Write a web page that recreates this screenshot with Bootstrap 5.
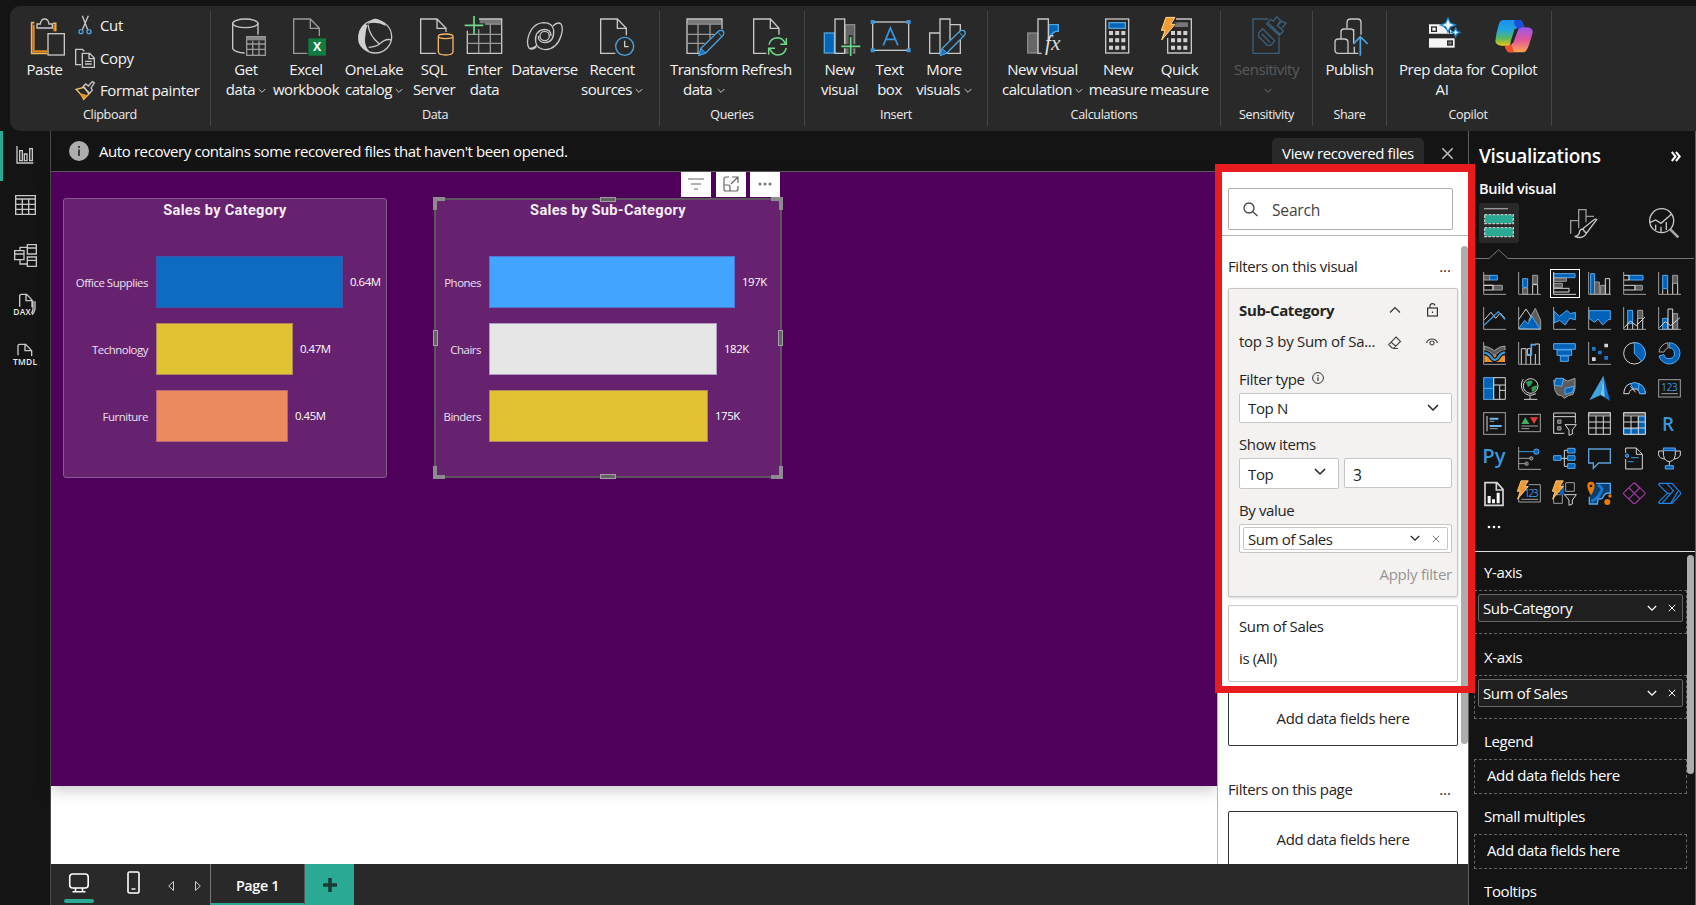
<!DOCTYPE html>
<html lang="en" data-bs-theme="dark">
<head>
<meta charset="utf-8">
<meta name="viewport" content="width=device-width, initial-scale=1">
<title>Report editor</title>
<link href="https://cdn.jsdelivr.net/npm/bootstrap@5.3.0/dist/css/bootstrap.min.css" rel="stylesheet">
<style>
body{font-family:"Open Sans","Noto Sans",sans-serif;font-size:15px;letter-spacing:-.37px;line-height:20px;background:#141414;color:#f3f3f3;width:1696px;height:905px;overflow:hidden}
svg{display:block;overflow:visible;flex:none}
svg text{letter-spacing:0}
.s{fill:none;stroke:#c8c8c8;stroke-width:4}
.g{fill:none;stroke:#9a9a9a;stroke-width:4}
.ribbon-wrap{height:131px;padding:6px 0 0 10px}
.ribbon{height:125px;background:#292929;border-radius:10px 0 0 10px}
.grp{position:relative;border-right:1px solid #454545;height:115px;margin-top:5px;padding-top:5px}
.grp .cap{height:20px;font-size:12.6px;letter-spacing:-.35px;text-align:center;color:#eee;margin-top:5px}
.btns{height:84px;justify-content:center;letter-spacing:-.45px}
.rb{text-align:center;white-space:nowrap;flex:none}
.rb svg{margin:0 auto 3px}
.rb .chev{display:inline-block;margin:0 0 0 3px;color:#ccc}
.sm-row{height:32.5px;gap:5px}
.rail{width:51px;border-right:1px solid #4a4a4a;flex:none}
.rail div{height:50px;display:flex;align-items:center;justify-content:center;padding-bottom:2px}
.rail .on{border-left:3px solid #2aaa94;padding-right:3px}
.msg{height:41px;border-bottom:1px solid #605e5c;color:#fff;padding:0 12px 1px 18px;letter-spacing:-.41px}
.view-btn{background:#292929;border-radius:5px;width:152px;height:30px;line-height:31px;margin-top:4px;text-align:center}
.canvas{background:#fff;flex:1;min-width:0}
.page-bg{background:#4f005a;height:614px;padding:26px 0 0 12px;gap:47px;box-shadow:0 4px 14px rgba(0,0,0,.22)}
.viz{position:relative;background:#66216f;border:1px solid #8b5a93;border-radius:3px;height:280px;padding-top:1px}
.viz h2{font:700 14.6px/20px Roboto,sans-serif;letter-spacing:.3px;text-align:center;color:#f5eef6;margin:0 0 36px}
.br{height:52px;margin-bottom:15px;font-size:11.4px;letter-spacing:-.45px;color:#ece2ee}
.br .nm{text-align:right;padding:2px 8px 0 0;flex:none}
.br .bar{height:52px;border:1px solid rgba(110,60,150,.45);flex:none}
.br .vl{padding-left:7px;color:#fff}
.sel{border:1px solid #5f5560;outline:1px solid #5f5560;outline-offset:-2px;border-radius:0}
.hd{position:absolute;background:#646264;border:1px solid #a19fa2}
.crn{position:absolute;width:12px;height:13px;border:0 solid #8e8b90}
.vtools{position:absolute;right:1px;top:-27px;gap:4.5px}
.vtools div{background:#fff;width:30px;height:25px;display:flex;align-items:center;justify-content:center;padding-bottom:2px}
.fpane{width:251px;background:#fff;border-left:1px solid #b5b5b5;color:#252423;flex:none;position:relative;height:692px;overflow:hidden}
.fpane .inn{padding:0 10px 0 10px}
.srch{height:42px;width:225px;border:1px solid #b0aeac;border-radius:2px;margin-top:16px;padding-left:14px;gap:14px;font-size:15.6px;color:#444}
.fcard{border:1px solid #c8c6c4;border-radius:2px;padding:0 5px 0 10px}
.fcard.act{background:#f3f2f1;box-shadow:0 1px 3px rgba(0,0,0,.18)}
.inp{background:#fff;border:1px solid #c8c6c4;border-radius:2px;height:30px;padding:0 12px 0 8px}
.drop{border:1px solid #333;border-radius:2px;text-align:center}
.sbar{position:absolute;background:#adadad;border-radius:4px}
.hilite{position:absolute;left:1215px;top:164px;width:260px;height:529px;border:7px solid #e81b1e;border-top-width:8px;z-index:5}
.vpane{width:228px;border-left:1px solid #606060;border-right:1px solid #606060;flex:none;color:#fff;position:relative;height:774px;overflow:hidden}
.vgrid{display:grid;grid-template-columns:repeat(6,35px);grid-auto-rows:35px;padding:7px 0 0 8px}
.vgrid>div{display:flex;align-items:center;justify-content:center}
.vgrid .pick{border:1px solid #fff;margin:3px 2.5px}
.vgrid svg{width:23px;height:23px}
.vgrid svg svg{width:40px;height:60px}
.a{fill:none;stroke:#9f9f9f;stroke-width:3}
.w{fill:none;stroke:#d6d6d6;stroke-width:3}
.b{fill:#0063b8;stroke:#55aaf0;stroke-width:3}
.k{fill:#5c5c5c;stroke:#9f9f9f;stroke-width:3}
.well{border:1px dashed #666;margin-left:5px;width:213px}
.chip{border:1px solid #666;border-radius:2px;background:#1f1f1f;height:28px;margin:3px;padding:0 6px 0 4px}
.foot{height:41px;background:#292929}
.tab-on{width:95px;border-left:1px solid #777;border-right:1px solid #555;border-bottom:2px solid #2aaa94;line-height:44px;text-align:center;font-weight:600;font-size:14.4px;color:#fff}
.addp{width:49px;background:#2aaa94}
</style>
</head>
<body>
<svg width="0" height="0" class="position-absolute">
<defs>
<linearGradient id="cpA" x1="0" y1="0" x2="0" y2="1"><stop offset="0" stop-color="#1b8ff0"/><stop offset=".4" stop-color="#23a7d8"/><stop offset=".7" stop-color="#58b860"/><stop offset="1" stop-color="#f2c411"/></linearGradient>
<linearGradient id="cpB" x1="0" y1="0" x2="0" y2="1"><stop offset="0" stop-color="#9a55f0"/><stop offset=".5" stop-color="#e0569a"/><stop offset="1" stop-color="#ffa552"/></linearGradient>
<symbol id="pencil" viewBox="0 0 80 80"><path d="M4 76L9 56L62 4Q70-1 76 5Q80 12 74 18L23 70Z" fill="#292929" stroke="#4ea3e0" stroke-width="4"/><path d="M2 78L9 56L23 70ZM60 8L71 20" fill="#1173cc" stroke="#4ea3e0" stroke-width="3"/></symbol>
<symbol id="cd" viewBox="0 0 12 8"><path d="M1 1L6 6L11 1" fill="none" stroke="currentColor" stroke-width="1.500"/></symbol>
<symbol id="xx" viewBox="0 0 10 10"><path d="M1 1L9 9M9 1L1 9" fill="none" stroke="currentColor" stroke-width="1.2"/></symbol>
<symbol id="bolt" viewBox="0 0 46 74"><path d="M17 3H44L31 24H44L4 71L14 42H3Z" fill="#f09a34" stroke="#ffd98a" stroke-width="3"/></symbol>
</defs></svg>

<header class="ribbon-wrap">
<div class="ribbon d-flex">
  <div class="grp" style="width:201px">
    <div class="btns d-flex justify-content-start">
      <div class="rb" style="width:65px;padding-left:4px"><svg width="40" height="40" viewBox="0 0 120 120"><path d="M28 20H20V112H66M92 46V22H84" fill="none" stroke="#f2b65c" stroke-width="5"/><path d="M26 26V106H66M88 46V26" fill="none" stroke="#e0861a" stroke-width="6"/><path class="s" style="fill:#292929" d="M36 36V24H46Q48 9 59 9Q70 9 72 24H82V36Z"/><rect class="s" x="69" y="53" width="49" height="64"/></svg>Paste</div>
      <div style="margin-top:-2px;letter-spacing:-.37px">
        <div class="sm-row d-flex align-items-center" style="height:22px"><svg width="20" height="20" viewBox="0 0 60 60"><path d="M22 2L38 44M40 2L22 44" class="s" stroke-width="3"/><circle cx="18" cy="50" r="6" fill="none" stroke="#4ea3e0" stroke-width="4"/><circle cx="42" cy="50" r="6" fill="none" stroke="#4ea3e0" stroke-width="4"/></svg>Cut</div>
        <div class="sm-row d-flex align-items-center" style="height:43px"><svg width="20" height="20" viewBox="0 0 60 60"><path class="s" d="M18 50H2V4H22L28 10M22 16H44L58 30V58H22ZM42 16V32H58M30 40H50M30 48H50"/></svg>Copy</div>
        <div class="sm-row d-flex align-items-center" style="height:21px"><svg width="20" height="20" viewBox="0 0 60 60"><path d="M3 28L28 22L42 42L26 58Q20 44 3 28Z" fill="#292929" stroke="#f2c66c" stroke-width="4"/><path d="M12 38L38 46L26 56Z" fill="#e8912d"/><path class="s" d="M24 20L32 12L40 18L52 5L58 9L48 24L52 30L44 40Z"/></svg>Format painter</div>
      </div>
    </div>
    <div class="cap">Clipboard</div>
  </div>

  <div class="grp" style="width:449px">
    <div class="btns d-flex" style="padding-right:6px">
      <div class="rb" style="width:52px"><svg width="40" height="40" viewBox="0 0 120 120"><ellipse class="s" cx="58" cy="22" rx="38" ry="13"/><path class="s" d="M20 22V98Q28 110 56 111M96 22V56"/><rect class="g" x="62" y="62" width="56" height="56"/><path d="M62 68H118" stroke="#888" stroke-width="10"/><path class="g" d="M62 84H118M62 100H118M80 74V118M99 74V118"/></svg>Get<br>data<svg class="chev" width="8" height="6"><use href="#cd"/></svg></div>
      <div class="rb" style="width:68px"><svg width="40" height="40" viewBox="0 0 120 120"><path class="g" d="M64 112H23V9H73L100 37V60M73 9V37H100"/><rect x="67" y="67" width="53" height="52" fill="#107c41"/><text x="93.500" y="106" font-size="37" font-weight="700" fill="#fff" text-anchor="middle">X</text></svg>Excel<br>workbook</div>
      <div class="rb" style="width:68px"><svg width="40" height="40" viewBox="0 0 120 120"><path d="M36 30Q8 52 14 80Q24 104 46 106Q28 86 34 60ZM40 24Q56 4 72 10Q90 16 96 30Q66 14 40 24Z" fill="#d0d0d0"/><circle class="s" cx="64" cy="62" r="49"/><path d="M34 24Q8 42 14 76Q22 98 40 104Q24 76 40 28Z" fill="#d0d0d0"/><path class="s" d="M42 26Q46 60 76 84M112 72Q96 66 76 84Q68 92 44 94"/></svg>OneLake<br>catalog<svg class="chev" width="8" height="6"><use href="#cd"/></svg></div>
      <div class="rb" style="width:52px"><svg width="40" height="40" viewBox="0 0 120 120"><path class="s" d="M66 112H20V9H69L96 37V48M69 9V37H96"/><path d="M73 62V108Q74 117 95 117T117 108V62" fill="#292929" stroke="#f5b566" stroke-width="4"/><ellipse cx="95" cy="61" rx="22" ry="7" fill="#292929" stroke="#f5b566" stroke-width="4"/></svg>SQL<br>Server</div>
      <div class="rb" style="width:49px"><svg width="40" height="40" viewBox="0 0 120 120"><path d="M44 16H110" stroke="#777" stroke-width="12"/><path class="s" d="M42 9H110V112H7V44"/><path class="g" d="M7 55H110M7 82H110M41 40V112M76 24V112M60 24H110"/><path d="M27 0V56M-1 28H55" stroke="#6fd88a" stroke-width="5"/></svg>Enter<br>data</div>
      <div class="rb" style="width:71px"><svg width="40" height="40" viewBox="0 0 120 120"><path class="s" stroke-width="4.500" d="M34 93Q20 104 12 96Q4 84 10 62Q22 22 56 20Q82 20 86 42M84 30Q98 16 108 24Q116 36 108 60Q96 98 62 101Q36 100 32 78M12 96Q22 100 36 88M32 78Q28 44 58 40Q78 40 78 60M86 42Q88 78 60 80Q40 80 40 60"/><circle class="s" cx="59" cy="60" r="14"/></svg>Dataverse</div>
      <div class="rb" style="width:64px"><svg width="40" height="40" viewBox="0 0 120 120"><path class="s" d="M70 112H26V9H76L103 37V58M76 9V37H103"/><circle cx="98" cy="91" r="27" fill="#292929" stroke="#4ea3e0" stroke-width="4"/><path class="s" d="M98 74V92H110"/></svg>Recent<br>sources<svg class="chev" width="8" height="6"><use href="#cd"/></svg></div>
    </div>
    <div class="cap">Data</div>
  </div>

  <div class="grp" style="width:145px">
    <div class="btns d-flex" style="padding-right:4px">
      <div class="rb" style="width:73px;letter-spacing:-.6px"><svg width="40" height="40" viewBox="0 0 120 120"><path d="M9 16H114" stroke="#777" stroke-width="12"/><path class="s" d="M50 112H9V9H114V40"/><path class="g" d="M9 24H114M9 55H90M9 82H62M42 24V112M78 24V68"/><svg x="42" y="41" width="80" height="80"><use href="#pencil"/></svg></svg>Transform<br>data<svg class="chev" width="8" height="6" style="margin-left:5px"><use href="#cd"/></svg></div>
      <div class="rb" style="width:52px"><svg width="40" height="40" viewBox="0 0 120 120"><path class="s" d="M58 112H20V9H70L96 37V56M70 9V37H96"/><path d="M66 86Q70 66 92 65Q108 66 116 84M118 66V85H100M118 96Q112 117 92 117Q76 116 68 98M65 116V97H84" fill="none" stroke="#6fd88a" stroke-width="4.500"/></svg>Refresh</div>
    </div>
    <div class="cap">Queries</div>
  </div>

  <div class="grp" style="width:183px">
    <div class="btns d-flex" style="padding-right:4px">
      <div class="rb" style="width:49px"><svg width="40" height="40" viewBox="0 0 120 120"><rect x="13" y="51" width="30" height="60" fill="#0067b8" stroke="#4ea3e0" stroke-width="4"/><rect x="76" y="26" width="28" height="85" fill="#666" stroke="#888" stroke-width="4"/><rect class="s" x="45" y="9" width="29" height="103" style="fill:#292929"/><path d="M92 58V118M64 91H121" stroke="#292929" stroke-width="12"/><path d="M92 63V120M64 91H121" stroke="#6fd88a" stroke-width="5"/></svg>New<br>visual</div>
      <div class="rb" style="width:51px"><svg width="40" height="40" viewBox="0 0 120 120"><rect class="s" x="8" y="18" width="108" height="85"/><path d="M2 12h12v12h-12zM110 12h12v12h-12zM2 97h12v12h-12zM110 97h12v12h-12z" fill="#3a96dd"/><path d="M40 88L61 36L84 88M47 70H77" fill="none" stroke="#3a96dd" stroke-width="5"/></svg>Text<br>box</div>
      <div class="rb" style="width:58px"><svg width="40" height="40" viewBox="0 0 120 120"><path class="s" d="M48 112H17V51H48M48 112V9H78V72M78 26H109V112H64"/><svg x="46" y="41" width="80" height="80"><use href="#pencil"/></svg></svg>More<br>visuals<svg class="chev" width="8" height="6" style="margin-left:4px"><use href="#cd"/></svg></div>
    </div>
    <div class="cap">Insert</div>
  </div>

  <div class="grp" style="width:233px">
    <div class="btns d-flex">
      <div class="rb" style="width:88px"><svg width="40" height="40" viewBox="0 0 120 120"><rect x="14" y="51" width="30" height="60" fill="#666" stroke="#888" stroke-width="4"/><path d="M77 26H106V46Q90 44 82 64L77 70Z" fill="#0067b8" stroke="#4ea3e0" stroke-width="4"/><path class="s" d="M56 112H45V9H76V80"/><text x="66" y="102" font-family="Liberation Serif" font-style="italic" font-size="64" fill="#ddd">fx</text></svg>New visual<br>calculation<svg class="chev" width="8" height="6"><use href="#cd"/></svg></div>
      <div class="rb" style="width:63px"><svg width="40" height="40" viewBox="0 0 120 120"><rect class="s" x="23" y="9" width="69" height="102"/><rect x="33" y="20" width="49" height="17" fill="#0067b8" stroke="#4ea3e0" stroke-width="4"/><path d="M33 51H82M33 73H82M33 95H82" stroke="#d0d0d0" stroke-width="12" stroke-dasharray="12 6.500"/></svg>New<br>measure</div>
      <div class="rb" style="width:60px"><svg width="40" height="40" viewBox="0 0 120 120"><path class="s" d="M48 9H94V111H23V66"/><path d="M44 26H84" stroke="#777" stroke-width="14"/><path d="M33 51H82M33 73H82M33 95H82" stroke="#d0d0d0" stroke-width="12" stroke-dasharray="12 6.500"/><path d="M17 0H50L38 22H50L22 60H-4L10 40" fill="#292929"/><svg x="1" y="1" width="46" height="74"><use href="#bolt"/></svg></svg>Quick<br>measure</div>
    </div>
    <div class="cap">Calculations</div>
  </div>

  <div class="grp" style="width:92px">
    <div class="btns d-flex" style="color:#5a5a5a">
      <div class="rb"><svg width="40" height="40" viewBox="0 0 120 120" fill="none" stroke="#3c5f7a" stroke-width="4"><path d="M66 9H21V112H99V62"/><path fill="#292929" d="M38 50L50 38L86 74L74 88L64 88L38 62ZM48 54L72 80M62 24L74 10L82 16L92 2L104 14L94 28L112 46L100 58ZM68 22L104 56M94 28L108 16L120 22L108 36"/></svg>Sensitivity<br><svg class="chev" width="8" height="6" style="color:#777"><use href="#cd"/></svg></div>
    </div>
    <div class="cap">Sensitivity</div>
  </div>

  <div class="grp" style="width:74px">
    <div class="btns d-flex">
      <div class="rb"><svg width="40" height="40" viewBox="0 0 120 120"><path class="s" d="M54 36V20Q54 9 65 9H86Q96 9 96 20V56M36 68V48Q36 39 45 39H64Q74 39 74 48V82M74 39V48M88 112H28Q18 112 18 102V78Q18 69 28 69H46Q57 69 57 79V112M76 92V112"/><path d="M94 119V64M73 84L94 62L116 84" fill="none" stroke="#4ea3e0" stroke-width="5"/></svg>Publish</div>
    </div>
    <div class="cap">Share</div>
  </div>

  <div class="grp" style="width:165px">
    <div class="btns d-flex">
      <div class="rb" style="width:90px"><svg width="40" height="40" viewBox="0 0 120 120"><path d="M21 25H58L84 53H21Z" fill="#f4f4f4"/><path d="M84 53H96L84 40Z" fill="#f4f4f4"/><rect x="29" y="33" width="14" height="13" fill="none" stroke="#292929" stroke-width="4"/><rect x="21" y="67" width="77" height="28" fill="#f4f4f4"/><rect x="77" y="75" width="14" height="12" fill="#777" stroke="#292929" stroke-width="4"/><path d="M78 6L85 21L100 27L85 33L78 48L71 33L56 27L71 21ZM101 36L105 45L114 49L105 53L101 62L97 53L88 49L97 45Z" fill="#e8f6ff" stroke="#1b86d0" stroke-width="4"/></svg>Prep data for<br>AI</div>
      <div class="rb" style="width:54px"><svg width="40" height="40" viewBox="0 0 120 120"><path d="M28 12H78Q86 14 90 34L72 36Q62 38 60 52L48 86Q44 92 34 90Q4 90 4 76Q6 52 14 26Q18 12 28 12Z" fill="url(#cpA)"/><path d="M62 12H78Q86 14 90 34L70 38L60 24Z" fill="#1c4fd8"/><path d="M90 34Q118 32 116 50L106 84Q98 109 88 109H44Q36 104 32 88Q48 96 56 80L72 42Q76 34 90 34Z" fill="url(#cpB)"/><path d="M32 88Q46 92 52 84L60 109H44Q36 104 32 88Z" fill="#f0502e"/><path d="M62 38L72 40L58 80L49 80Z" fill="#292929"/></svg>Copilot</div>
    </div>
    <div class="cap" style="padding-right:2px">Copilot</div>
  </div>
</div>
</header>

<div class="d-flex" style="height:774px">
  <nav class="rail">
    <div class="on"><svg width="18" height="18" viewBox="0 0 54 54"><path class="s" stroke-width="3" d="M3 0V51H52"/><path class="s" d="M11 14H19V44H11ZM25 24H33V44H25ZM41 8H49V44H41Z"/></svg></div>
    <div><svg width="21" height="20" viewBox="0 0 63 60"><path class="s" d="M2 2H61V58H2ZM2 12H61M2 28H61M2 43H61M22 12V58M41 12V58"/></svg></div>
    <div><svg width="23" height="23" viewBox="0 0 69 69"><path class="s" stroke-width="3.500" d="M40 2H67V30H40ZM40 12H67M40 39H67V67H40ZM40 49H67M2 20H30V47H2ZM2 30H30M40 10H18V20M18 47V60H40"/></svg></div>
    <div><svg width="22" height="22" viewBox="0 0 66 66"><path class="s" d="M17 38V4Q20 1 22 1H38L54 18V40M36 2V20H54M63 22V44Q60 58 54 62M57 20V44Q56 54 52 58"/><text x="-2" y="63" font-size="25" font-weight="600" fill="#eee" textLength="52">DAX</text></svg></div>
    <div><svg width="24" height="22" viewBox="0 0 72 66"><path class="s" d="M15 34V4Q17 1 20 1H38L56 20V36M36 2V20H56"/><text x="0" y="62" font-size="25" font-weight="600" fill="#eee" textLength="72">TMDL</text></svg></div>
  </nav>

  <div class="d-flex flex-column" style="width:1417px">
    <div class="msg d-flex align-items-center">
      <svg width="20" height="20" viewBox="0 0 20 20"><circle cx="10" cy="10" r="10" fill="#adadad"/><path d="M10 8.500V15M10 5V7" stroke="#222" stroke-width="1.600"/></svg>
      <span style="margin-left:10px;padding-top:1px">Auto recovery contains some recovered files that haven't been opened.</span>
      <span class="view-btn ms-auto" style="letter-spacing:-.37px">View recovered files</span>
      <svg width="13" height="13" style="margin:5px 2px 0 17px;color:#bbb"><use href="#xx"/></svg>
    </div>
    <div class="d-flex" style="height:692px">
      <main class="canvas">
        <div class="page-bg d-flex align-items-start">
          <section class="viz" style="width:324px">
            <h2>Sales by Category</h2>
            <div class="br d-flex align-items-center"><span class="nm" style="width:92px">Office Supplies</span><span class="bar" style="width:187px;background:#0f6bc2"></span><span class="vl">0.64M</span></div>
            <div class="br d-flex align-items-center"><span class="nm" style="width:92px">Technology</span><span class="bar" style="width:137px;background:#e1c233"></span><span class="vl">0.47M</span></div>
            <div class="br d-flex align-items-center"><span class="nm" style="width:92px">Furniture</span><span class="bar" style="width:132px;background:#ec8a60"></span><span class="vl">0.45M</span></div>
          </section>
          <section class="viz sel" style="width:348px">
            <h2>Sales by Sub-Category</h2>
            <div class="br d-flex align-items-center"><span class="nm" style="width:54px">Phones</span><span class="bar" style="width:246px;background:#41a4ff"></span><span class="vl">197K</span></div>
            <div class="br d-flex align-items-center"><span class="nm" style="width:54px">Chairs</span><span class="bar" style="width:228px;background:#e6e6e6"></span><span class="vl">182K</span></div>
            <div class="br d-flex align-items-center"><span class="nm" style="width:54px">Binders</span><span class="bar" style="width:219px;background:#e1c233"></span><span class="vl">175K</span></div>
            <div class="vtools d-flex">
              <div><svg width="16" height="12" viewBox="0 0 16 12"><path d="M0 1H16M3 6H13M6 11H10" stroke="#666" stroke-width="1.200"/></svg></div>
              <div><svg width="16" height="16" viewBox="0 0 16 16" fill="none" stroke="#666" stroke-width="1.200"><path d="M6 1H3Q1 1 1 3V13Q1 15 3 15H13Q15 15 15 13V10M1 9H5Q7 9 7 11V15M9 1H15V7M15 1L8 8"/></svg></div>
              <div><svg width="14" height="4" viewBox="0 0 14 4" fill="#777"><circle cx="2" cy="2" r="1.500"/><circle cx="7" cy="2" r="1.500"/><circle cx="12" cy="2" r="1.500"/></svg></div>
            </div>
            <i class="crn" style="left:-2px;top:-2px;border-width:4px 0 0 4px"></i><i class="crn" style="right:-2px;top:-2px;border-width:4px 4px 0 0"></i>
            <i class="crn" style="left:-2px;bottom:-2px;border-width:0 0 4px 4px"></i><i class="crn" style="right:-2px;bottom:-2px;border-width:0 4px 4px 0"></i>
            <i class="hd" style="left:165px;top:-2px;width:16px;height:5px"></i><i class="hd" style="left:165px;bottom:-2px;width:16px;height:5px"></i>
            <i class="hd" style="left:-2px;top:131px;width:5px;height:16px"></i><i class="hd" style="right:-2px;top:131px;width:5px;height:16px"></i>
          </section>
        </div>
      </main>

      <aside class="fpane">
        <div class="inn">
          <div class="srch d-flex align-items-center"><svg width="15" height="15" viewBox="0 0 15 15" fill="none" stroke="#444" stroke-width="1.300"><circle cx="6" cy="6" r="5"/><path d="M9.500 9.500L14.500 14"/></svg><span style="padding-top:2px;letter-spacing:-.2px">Search</span></div>
        </div>
        <div style="border-top:1px solid #b5b5b5;margin-top:5px"></div>
        <div class="inn">
          <div class="d-flex justify-content-between" style="padding:20px 7px 0 0;height:52px"><span>Filters on this visual</span><span style="letter-spacing:0">...</span></div>
          <div class="fcard act" style="height:309px">
            <div class="d-flex align-items-center" style="height:41px"><b style="width:151px">Sub-Category</b><svg width="10" height="6" viewBox="0 0 10 6"><path d="M0 5.500L5 .5L10 5.500" fill="none" stroke="#333" stroke-width="1.200"/></svg><svg width="11" height="14" viewBox="0 0 11 14" style="margin-left:27px" fill="none" stroke="#333" stroke-width="1.200"><rect x=".6" y="5" width="9.800" height="8"/><path d="M3 5V3Q3 .7 5.500 .7Q7.500 .7 8 2.500M5.500 8.500V10"/></svg></div>
            <div class="d-flex align-items-center" style="height:22px;letter-spacing:-.28px"><span style="width:149px">top 3 by Sum of Sa...</span><svg width="13" height="13" viewBox="0 0 13 13" fill="none" stroke="#444" stroke-width="1.100" style="margin-top:2px"><path d="M8 1L12.500 5.500L6 12H4L.7 8.500ZM3 6L8 10.500M5 12.500H10"/></svg><svg width="12" height="8" viewBox="0 0 12 8" style="margin:2px 0 0 25px" fill="none" stroke="#444" stroke-width="1.200"><path d="M.5 5Q2 1 6 1T11.500 5"/><circle cx="6" cy="5" r="2"/></svg></div>
            <div class="d-flex align-items-center" style="height:41px;padding-top:12px"><span>Filter type</span><svg width="12" height="12" viewBox="0 0 12 12" style="margin:-2px 0 0 7px" fill="none" stroke="#333"><circle cx="6" cy="6" r="5.400"/><path d="M6 5.200V9M6 3V4.300" stroke-width="1.200"/></svg></div>
            <div class="inp d-flex align-items-center justify-content-between"><span>Top N</span><svg width="12" height="8"><use href="#cd"/></svg></div>
            <div style="padding-top:11px;height:35px">Show items</div>
            <div class="d-flex" style="gap:5px"><div class="inp d-flex align-items-center justify-content-between" style="width:100px;height:31px"><span>Top</span><svg width="12" height="8" style="margin-bottom:3px"><use href="#cd"/></svg></div><div class="inp d-flex align-items-center flex-fill" style="font-size:15.6px;padding-top:3px">3</div></div>
            <div style="padding-top:11px;height:35px">By value</div>
            <div class="inp" style="height:29px;padding:2px 3px"><div class="inp d-flex align-items-center" style="height:23px;padding:0 7px 0 4px"><span>Sum of Sales</span><svg class="ms-auto" width="10" height="7"><use href="#cd"/></svg><svg width="8" height="8" style="margin-left:12px;color:#777"><use href="#xx"/></svg></div></div>
            <div class="text-end" style="padding-top:11px;color:#979593;letter-spacing:-.25px">Apply filter</div>
          </div>
          <div class="fcard" style="height:77px;margin-top:8px;padding-top:10px">Sum of Sales<div style="margin-top:12px">is (All)</div></div>
          <div class="drop" style="height:56px;margin-top:8px;padding-top:17px">Add data fields here</div>
          <div class="d-flex justify-content-between" style="padding:33px 7px 0 0;height:65px"><span>Filters on this page</span><span style="letter-spacing:0">...</span></div>
          <div class="drop" style="height:64px;padding-top:17px">Add data fields here</div>
        </div>
        <div class="sbar" style="right:0;top:74px;width:7px;height:498px"></div>
      </aside>
    </div>
    <footer class="foot d-flex">
      <div style="width:55px;padding:9px 0 0 13px"><svg width="30" height="30" viewBox="0 0 30 30"><rect x="5.700" y="1" width="18.500" height="14" rx="3" fill="none" stroke="#fff" stroke-width="1.600"/><path d="M11.500 15V18M18.500 15V18M8.500 18.700H21.500" stroke="#fff" stroke-width="1.600"/><rect x="0" y="26" width="30" height="4" rx="2" fill="#2aaa94"/></svg></div>
      <div style="width:54px;padding:7px 0 0 21px"><svg width="13" height="24" viewBox="0 0 13 24"><rect x="1" y="1" width="11" height="21" rx="1.500" fill="none" stroke="#fff" stroke-width="1.600"/><path d="M4.500 18H8.500" stroke="#fff" stroke-width="1.400"/></svg></div>
      <div class="d-flex align-items-center" style="width:50px;padding:2px 0 0 8px;gap:21px"><svg width="6" height="10" viewBox="0 0 6 10" fill="none" stroke="#ccc"><path d="M5.500 .5V9.500L.7 5Z"/></svg><svg width="6" height="10" viewBox="0 0 6 10" fill="none" stroke="#ccc"><path d="M.5 .5V9.500L5.300 5Z"/></svg></div>
      <div class="tab-on">Page 1</div>
      <div class="addp d-flex align-items-center justify-content-center"><svg width="14" height="14" viewBox="0 0 14 14"><path d="M7 0V14M0 7H14" stroke="#1d3b36" stroke-width="3.600"/></svg></div>
    </footer>
  </div>

  <aside class="vpane">
    <div class="d-flex align-items-center justify-content-between" style="font-size:19px;font-weight:600;letter-spacing:-.3px;padding:12px 14px 0 10px;height:38px"><span>Visualizations</span><svg width="10" height="11" viewBox="0 0 10 11" fill="none" stroke="#fff" stroke-width="2"><path d="M.8 1L4.500 5.500L.8 10M5 1L8.700 5.500L5 10"/></svg></div>
    <div style="font-weight:600;font-size:14.600px;letter-spacing:-.3px;padding:9px 0 0 10px;height:34px">Build visual</div>
    <div class="d-flex" style="padding-left:10px;height:46px">
      <div style="width:40px;height:40px;background:#292929;border-radius:3px;padding:5px"><svg width="30" height="30" viewBox="0 0 90 90"><path d="M0 2H72" stroke="#9a9a9a" stroke-width="4"/><rect x="2" y="20" width="86" height="27" fill="#2aaa94" stroke="#c8c8c8" stroke-width="4" stroke-dasharray="8 4"/><rect x="2" y="59" width="86" height="27" fill="#2aaa94" stroke="#c8c8c8" stroke-width="4" stroke-dasharray="8 4"/></svg></div>
      <svg width="28" height="29" viewBox="0 0 84 87" style="margin:6px 0 0 51px"><path class="g" d="M2 74V35H26V58M26 46V2H48V40M48 22H72"/><path class="s" d="M80 32L50 72Q40 68 40 58L70 34Q78 28 80 32ZM40 60Q28 60 28 72Q24 82 14 82Q40 92 50 72"/></svg>
      <svg width="30" height="30" viewBox="0 0 90 90" style="margin:5px 0 0 51px"><circle class="s" cx="38" cy="38" r="36"/><path class="s" d="M2 44L20 36L36 46L68 18M20 50V66M36 56V74M52 42V66"/><path d="M64 64L88 88" stroke="#aaa" stroke-width="8"/></svg>
    </div>
    <svg width="220" height="10" viewBox="0 0 220 10" style="margin-left:5px"><path d="M0 9.500H15L24.500 .8L34 9.500H220" fill="none" stroke="#757575"/></svg>
    <div class="vgrid" style="height:292px">
      <div><svg viewBox="0 0 69 69"><path class="k" d="M2 10H20V24H2ZM2 40H58V54H30V40H2"/><path class="b" d="M20 10H43V24H20Z"/><path class="w" d="M2 40H30V54H2Z"/><path class="a" d="M2 0V67H69"/></svg></div>
      <div><svg viewBox="0 0 69 69"><path class="k" d="M44 10H59V36H44ZM14 48H29V67H14Z"/><path class="b" d="M14 20H29V46H14Z"/><path class="w" d="M44 38H59V67M44 38V67"/><path class="a" d="M2 0V67H69"/></svg></div>
      <div class="pick"><svg viewBox="0 0 69 69"><path class="b" d="M2 5H66V17H2Z"/><path class="k" d="M2 18H40V28H2ZM2 34H28V46H2Z"/><path class="w" d="M2 49H48V60H2"/><path class="w" d="M2 0V67H69"/></svg></div>
      <div><svg viewBox="0 0 69 69"><path class="b" d="M8 5H20V67H8Z"/><path class="k" d="M20 30H34V67H20ZM38 40H52V67H38Z"/><path class="w" d="M52 20H65V67H52Z"/><path class="a" d="M2 0V67H69"/></svg></div>
      <div><svg viewBox="0 0 69 69"><path class="b" d="M18 10H60V24H18Z"/><path class="k" d="M36 40H58V54H36Z"/><path class="w" d="M2 10H18V24H2M2 40H36V54H2"/><path class="a" d="M2 0V67H69"/></svg></div>
      <div><svg viewBox="0 0 69 69"><path class="b" d="M14 10H29V50H14Z"/><path class="k" d="M44 10H59V34H44Z"/><path class="w" d="M14 52V67M29 52V67M44 34V67M59 34V67"/><path class="a" d="M2 0V67H69"/></svg></div>

      <div><svg viewBox="0 0 69 69"><path class="w" d="M4 38L24 16L38 34L52 18L66 34"/><path d="M4 54L46 14L66 38" fill="none" stroke="#3a96dd" stroke-width="4"/><path class="a" d="M2 0V67H69"/></svg></div>
      <div><svg viewBox="0 0 69 69"><path class="k" d="M32 40L52 4L68 40V66H50Z"/><path class="w" d="M2 38L24 6L44 36"/><path class="b" d="M2 64L20 40L30 50L42 28L66 66Z"/><path class="a" d="M2 0V67H69"/></svg></div>
      <div><svg viewBox="0 0 69 69"><path class="b" d="M3 12L20 28L42 10L52 20L67 16V38L50 34L36 54L20 40L3 48Z"/><path class="a" d="M2 0V67H69"/></svg></div>
      <div><svg viewBox="0 0 69 69"><path class="b" d="M3 11H67V38H60L44 54L30 36L20 46L3 34Z"/><path class="a" d="M2 0V67H69"/></svg></div>
      <div><svg viewBox="0 0 69 69"><path class="b" d="M14 10H29V50H14Z"/><path class="k" d="M44 10H59V34H44Z"/><path class="w" d="M14 50V67M29 50V67M44 34V67M59 34V67M4 62L22 42L40 56L66 30"/><path class="a" d="M2 0V67H69"/></svg></div>
      <div><svg viewBox="0 0 69 69"><path class="b" d="M14 34H29V67H14Z"/><path class="k" d="M44 20H59V67H44Z"/><path class="w" d="M30 6H44V67H30ZM4 62L22 44L38 56L66 32"/><path class="a" d="M2 0V67H69"/></svg></div>

      <div><svg viewBox="0 0 69 69"><path d="M4 40H66V60H4Z" fill="#e8912d"/><path class="k" d="M4 12Q22 16 34 26Q50 12 66 12V24Q50 26 34 40Q18 26 4 24Z"/><path d="M4 32Q18 34 26 48Q36 60 46 46Q54 32 66 32" fill="none" stroke="#141414" stroke-width="14"/><path d="M4 32Q18 34 26 48Q36 60 46 46Q54 32 66 32" fill="none" stroke="#3a96dd" stroke-width="7"/><path class="a" d="M2 0V67H69"/></svg></div>
      <div><svg viewBox="0 0 69 69"><path class="w" d="M10 20V67M10 20H24V67M28 20H38V40H28ZM38 40V67M52 6H64V67M52 36V67"/><path d="M28 38H40V8H54" fill="none" stroke="#55aaf0" stroke-width="5"/><path class="a" d="M2 0V67H69"/></svg></div>
      <div><svg viewBox="0 0 69 69"><path class="b" d="M2 5H67V22H2ZM12 24H56V40H12ZM22 42H46V58H22Z"/></svg></div>
      <div><svg viewBox="0 0 69 69"><path d="M12 15h11v11h-11zM30 26h11v11h-11zM49 42h11v11h-11z" fill="#1a78cc"/><path d="M49 5h11v11h-11zM12 46h11v11h-11z" fill="#d6d6d6"/><path class="a" d="M2 0V67H69"/></svg></div>
      <div><svg viewBox="0 0 69 69"><circle class="w" cx="34" cy="34" r="32"/><path class="b" d="M34 2A32 32 0 0 1 56 58L34 34Z"/></svg></div>
      <div><svg viewBox="0 0 69 69"><path class="b" d="M34 2A32 32 0 1 1 3 42L18 38A16 16 0 1 0 34 18Z"/><path class="a" d="M3 30A32 32 0 0 1 30 2V18A18 18 0 0 0 18 30Z"/></svg></div>

      <div><svg viewBox="0 0 69 69"><rect class="b" x="2" y="2" width="30" height="65"/><path class="w" d="M32 2H67V67H32ZM32 24H67M50 24V67M50 40H67"/><path d="M2 34H32" stroke="#55aaf0" stroke-width="3"/></svg></div>
      <div><svg viewBox="0 0 69 69"><circle class="w" cx="38" cy="27" r="22"/><path d="M24 16Q36 6 44 14Q42 24 30 30ZM40 32Q52 24 58 26Q54 44 42 44Z" fill="#2f9e56"/><path class="w" d="M16 6Q4 24 16 44Q30 62 54 50M36 56V66M18 67H58"/></svg></div>
      <div><svg viewBox="0 0 69 69"><path class="k" d="M2 10L30 6L44 12L66 4V34L60 52L46 56L34 64L26 56L14 54L6 40Z"/><path class="b" d="M8 4H32L26 28L4 24ZM36 34L64 28L58 46L36 52Z"/></svg></div>
      <div><svg viewBox="0 0 69 69"><path d="M46-4L66 72L38 54Z" fill="#1173cc"/><path d="M46-4L4 70L38 54Z" fill="#3fa4de"/><path d="M46-4L38 54L50 60Z" fill="#6fc6ee"/></svg></div>
      <div><svg viewBox="0 0 69 69"><path class="w" d="M2 50Q4 18 34 18T67 50H50Q48 36 34 36T18 50Z"/><path class="b" d="M22 20Q36 14 48 20L50 38Q40 30 32 36Z"/><path class="b" d="M48 20Q66 28 67 50H50Q48 42 46 40Z"/><path class="w" d="M22 28L38 46"/></svg></div>
      <div><svg viewBox="0 0 69 69"><rect class="a" x="2" y="8" width="65" height="52"/><text x="34" y="43" font-size="31" textLength="50" fill="#3a96dd" text-anchor="middle">123</text><path class="a" d="M10 50H60"/></svg></div>

      <div><svg viewBox="0 0 69 69"><rect class="a" x="2" y="2" width="65" height="65"/><path class="w" d="M12 12V58"/><path d="M20 20H46M20 42H56" stroke="#6db7f0" stroke-width="6"/><path class="a" d="M20 28H34M20 50H44"/></svg></div>
      <div><svg viewBox="0 0 69 69"><rect class="a" x="2" y="7" width="65" height="52"/><path d="M10 36L22 16L34 36Z" fill="#3cae60"/><path d="M36 16H60L48 36Z" fill="#e83a3a"/><path class="a" d="M10 42H60M10 50H34"/></svg></div>
      <div><svg viewBox="0 0 69 69"><path class="w" d="M34 64H2V3H67V34M2 14H67"/><path class="k" d="M14 24h10v10h-10zM14 44h10v10h-10z"/><path class="w" d="M36 38H70L58 54V66L48 70V54Z"/></svg></div>
      <div><svg viewBox="0 0 69 69"><path class="k" d="M2 2H67V12H2Z"/><path class="w" d="M2 2H67V67H2ZM2 30H67M2 48H67M24 12V67M46 12V67"/></svg></div>
      <div><svg viewBox="0 0 69 69"><path class="k" d="M2 2H67V12H2Z"/><path class="b" d="M46 14H67V67H2V50H46Z"/><path class="w" d="M2 2H67V67H2ZM2 30H67M2 48H67M24 12V67M46 12V67"/></svg></div>
      <div><svg viewBox="0 0 69 69"><text x="12" y="56" font-size="60" font-weight="600" fill="#3a96dd" textLength="36" lengthAdjust="spacingAndGlyphs">R</text></svg></div>

      <div><svg viewBox="0 0 69 69"><text x="-2" y="48" font-size="58" font-weight="600" fill="#3a96dd" textLength="70" lengthAdjust="spacingAndGlyphs">Py</text></svg></div>
      <div><svg viewBox="0 0 69 69"><path class="a" d="M2 0V67H69M2 34H38M2 50H24"/><path d="M2 14H46" stroke="#3a96dd" stroke-width="3"/><circle class="b" cx="55" cy="14" r="8"/><circle class="k" cx="40" cy="34" r="5"/><circle class="k" cx="26" cy="50" r="5"/></svg></div>
      <div><svg viewBox="0 0 69 69"><path class="w" d="M24 34H44M44 10H34V58H44"/><path class="b" d="M2 26H24V40H2ZM44 4H66V18H44ZM44 26H66V40H44ZM44 50H66V64H44Z"/></svg></div>
      <div><svg viewBox="0 0 69 69"><path d="M2 6H67V48H32L16 64V48H2Z" fill="none" stroke="#5b9fd6" stroke-width="4"/></svg></div>
      <div><svg viewBox="0 0 69 69"><path class="w" d="M8 18V3H40L58 22V66H8V36M40 3V22H58"/><circle class="b" cx="12" cy="26" r="5"/><path d="M24 32H48M14 44H32" stroke="#3a96dd" stroke-width="3"/></svg></div>
      <div><svg viewBox="0 0 69 69"><path class="w" d="M16 12H2V24Q4 34 20 36M52 12H67V24Q64 34 48 36M16 12Q14 42 34 44Q54 42 52 12M34 44V56"/><path class="b" d="M16 3H52V11H16ZM22 56H46V66H22Z"/></svg></div>

      <div><svg viewBox="0 0 69 69"><path class="w" style="stroke-width:5" d="M6 2H42L60 22V70H6ZM40 2V24H60"/><path d="M14 42h9v22h-9zM27 52h9v12h-9zM41 32h9v32h-9z" fill="#fff"/></svg></div>
      <div><svg viewBox="0 0 69 69"><path class="a" d="M32 8H67V60H2V46"/><text x="40" y="45" font-size="32" textLength="44" fill="#3a96dd" text-anchor="middle">123</text><path class="a" d="M10 52H60"/><svg x="-6" y="-6" viewBox="0 0 46 74"><use href="#bolt"/></svg></svg></div>
      <div><svg viewBox="0 0 69 69"><path class="a" d="M38 2H64V28H38ZM2 38H28V64H2ZM2 30H30V6"/><path d="M24 20H34V38H20" fill="#0063b8"/><path class="w" d="M34 38H70L58 54V66L48 70V54Z"/><svg x="-6" y="-6" viewBox="0 0 46 74"><use href="#bolt"/></svg></svg></div>
      <div><svg viewBox="0 0 69 69"><path d="M24 4H67V34Q52 30 46 44Q42 54 30 50L28 66H4V44" fill="#0b3f70" stroke="#55aaf0" stroke-width="4"/><path d="M30 8Q50 20 36 34Q30 50 10 58" fill="none" stroke="#1a78cc" stroke-width="9"/><path d="M-2 10A11 11 0 0 1 20 10Q20 24 9 40Q-2 24-2 10Z" fill="#e8790c"/><circle cx="9" cy="12" r="4" fill="#141414"/><circle cx="58" cy="60" r="9" fill="#e8790c"/><circle cx="66" cy="42" r="5" fill="#e8790c"/></svg></div>
      <div><svg viewBox="0 0 69 69" fill="none" stroke="#a238ac" stroke-width="3.500"><path d="M30 5Q34 2 38 5L65 31Q68 34 65 37L38 63Q34 66 30 63L3 37Q0 34 3 31ZM18 18L50 50M50 18L34 34L18 50M34 2L50 18L34 34M34 34L50 50"/></svg></div>
      <div><svg viewBox="0 0 69 69" fill="none" stroke="#1a84e8" stroke-width="3.500"><path d="M4 4H42L67 31Q69 34 67 37L42 64H4L2 60L28 34L2 8ZM28 34H36M14 62L46 26L26 4M38 64L60 28"/></svg></div>

      <div><svg viewBox="0 0 69 69" fill="#fff"><circle cx="18" cy="30" r="4"/><circle cx="33" cy="30" r="4"/><circle cx="48" cy="30" r="4"/></svg></div>
    </div>
    <div style="border-top:1px solid #ddd;margin-left:5px"></div>
    <div>
      <div style="padding:10px 0 0 15px;height:38px">Y-axis</div>
      <div class="well" style="height:44px"><div class="chip d-flex align-items-center"><span>Sub-Category</span><svg class="ms-auto" width="10" height="7"><use href="#cd"/></svg><svg width="8" height="8" style="margin-left:11px"><use href="#xx"/></svg></div></div>
      <div style="padding:13px 0 0 15px;height:41px">X-axis</div>
      <div class="well" style="height:44px"><div class="chip d-flex align-items-center"><span>Sum of Sales</span><svg class="ms-auto" width="10" height="7"><use href="#cd"/></svg><svg width="8" height="8" style="margin-left:11px"><use href="#xx"/></svg></div></div>
      <div style="padding:12px 0 0 15px;height:40px">Legend</div>
      <div class="well" style="height:35px;padding:5px 0 0 12px">Add data fields here</div>
      <div style="padding:12px 0 0 15px;height:40px">Small multiples</div>
      <div class="well" style="height:35px;padding:5px 0 0 12px">Add data fields here</div>
      <div style="padding:12px 0 0 15px;height:30px;overflow:hidden">Tooltips</div>
    </div>
    <div class="sbar" style="right:1px;top:424px;width:7px;height:219px"></div>
  </aside>
</div>
<div class="hilite"></div>
<script src="https://cdn.jsdelivr.net/npm/bootstrap@5.3.0/dist/js/bootstrap.bundle.min.js"></script>
</body>
</html>
